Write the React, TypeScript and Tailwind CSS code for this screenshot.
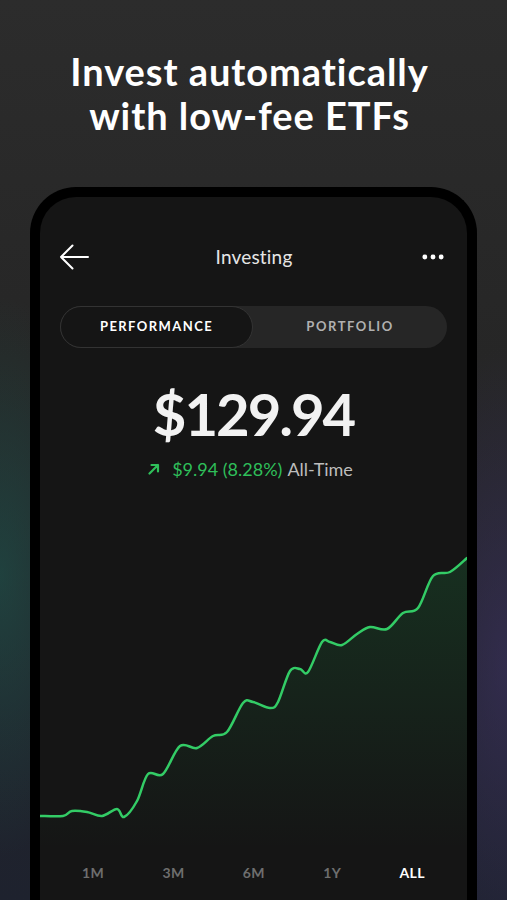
import { MoreHorizontal } from "lucide-react";

const points: [number, number][] = [
  [0, 327], [23, 327], [32, 322], [47, 323], [62, 327], [77, 320], [84, 328],
  [97, 312], [108, 285], [123, 285], [140, 257], [157, 259], [173, 247],
  [187, 243], [203, 214], [213, 213], [230, 219], [238, 213], [250, 182],
  [260, 180], [268, 183], [282, 153], [290, 153], [302, 156], [317, 145],
  [330, 138], [347, 140], [363, 124], [378, 119], [393, 87], [410, 83],
  [427, 69],
];

// catmull-rom -> cubic bezier so the line stays smooth
const smoothPath = (pts: [number, number][]) => {
  let d = `M${pts[0][0]},${pts[0][1]}`;
  for (let i = 0; i < pts.length - 1; i++) {
    const p0 = pts[i - 1] || pts[i];
    const p1 = pts[i];
    const p2 = pts[i + 1];
    const p3 = pts[i + 2] || p2;
    const c1x = p1[0] + (p2[0] - p0[0]) / 6;
    const c1y = p1[1] + (p2[1] - p0[1]) / 6;
    const c2x = p2[0] - (p3[0] - p1[0]) / 6;
    const c2y = p2[1] - (p3[1] - p1[1]) / 6;
    d += ` C${c1x.toFixed(1)},${c1y.toFixed(1)} ${c2x.toFixed(1)},${c2y.toFixed(1)} ${p2[0]},${p2[1]}`;
  }
  return d;
};

const BackArrow = () => (
  <svg width="30" height="26" viewBox="0 0 30 26" fill="none">
    <path
      d="M29 13H2M13.5 1.5L2 13l11.5 11.5"
      stroke="white"
      strokeWidth="2"
      strokeLinecap="round"
      strokeLinejoin="round"
    />
  </svg>
);

const UpArrow = () => (
  <svg width="12" height="12" viewBox="0 0 12 12" fill="none">
    <path
      d="M1.5 10.5L10 2M3.5 2H10v6.5"
      stroke="#2fbf5a"
      strokeWidth="2.2"
      strokeLinecap="round"
      strokeLinejoin="round"
    />
  </svg>
);

const Chart = () => {
  const line = smoothPath(points);
  const area = `${line} L427,360 L0,360 Z`;
  return (
    <svg width="427" height="360" viewBox="0 0 427 360" className="block">
      <defs>
        <linearGradient id="fill" x1="0" y1="0" x2="0" y2="1">
          <stop offset="0%" stopColor="#22c55e" stopOpacity="0.15" />
          <stop offset="100%" stopColor="#22c55e" stopOpacity="0" />
        </linearGradient>
      </defs>
      <path d={area} fill="url(#fill)" />
      <path d={line} fill="none" stroke="#33cc66" strokeWidth="2.5" strokeLinecap="round" />
    </svg>
  );
};

const ranges = ["1M", "3M", "6M", "1Y", "ALL"];

export default function App() {
  return (
    <div
      className="relative h-[900px] w-full overflow-hidden bg-[#262626] bg-[radial-gradient(ellipse_110px_280px_at_0%_64%,rgba(30,84,76,0.6),transparent),radial-gradient(ellipse_110px_320px_at_100%_74%,rgba(66,52,110,0.5),transparent),linear-gradient(to_bottom,#2c2c2c_0%,#262626_40%,#1e222e_100%)]"
      style={{ fontFamily: "Lato, 'Open Sans', sans-serif" }}
    >
      <h1 className="pt-[49px] pr-[8px] text-center text-[38px] font-bold leading-[44px] tracking-[0.025em] text-white">
        Invest automatically
        <br />
        with low-fee ETFs
      </h1>

      <div className="mx-[30px] mt-[50px] h-[760px] rounded-t-[46px] border-[10px] border-b-0 border-black bg-[#151515]">
        <div className="flex h-full flex-col">
          <header className="mt-[40px] flex h-[40px] items-center justify-between pl-[19px] pr-[20px]">
            <BackArrow />
            <span className="text-[19px] tracking-[0.01em] text-[#e6e6e6]">Investing</span>
            <MoreHorizontal size={28} color="#ffffff" strokeWidth={2.2} />
          </header>

          <div className="mx-[20px] mt-[29px] flex h-[42px] rounded-full bg-[#262626]">
            <div className="flex w-[193px] items-center justify-center rounded-full border border-[#333] bg-[#151515] text-[13px] font-bold tracking-[0.11em] text-white">
              PERFORMANCE
            </div>
            <div className="flex flex-1 items-center justify-center text-[13px] font-bold tracking-[0.12em] text-[#b0b0b0]">
              PORTFOLIO
            </div>
          </div>

          <div className="mt-[35px] text-center text-[58px] font-bold leading-[62px] tracking-[-0.035em] text-[#f2f2f2]">
            $129.94
          </div>

          <div className="mt-[13px] flex items-center justify-center gap-[9px] pr-[6px] text-[18px] leading-[22px]">
            <UpArrow />
            <span className="ml-[3px] text-[#2fbf5a]">$9.94 (8.28%)</span>
            <span className="-ml-[4px] text-[#bdbdbd]">All-Time</span>
          </div>

          <div className="mt-[9px]">
            <Chart />
          </div>

          <div className="mt-[13px] flex justify-between px-[42px] text-[14px] font-bold tracking-[0.03em]">
            {ranges.map((r) => (
              <span key={r} className={r === "ALL" ? "text-white" : "text-[#6e6e6e]"}>
                {r}
              </span>
            ))}
          </div>
        </div>
      </div>
    </div>
  );
}
